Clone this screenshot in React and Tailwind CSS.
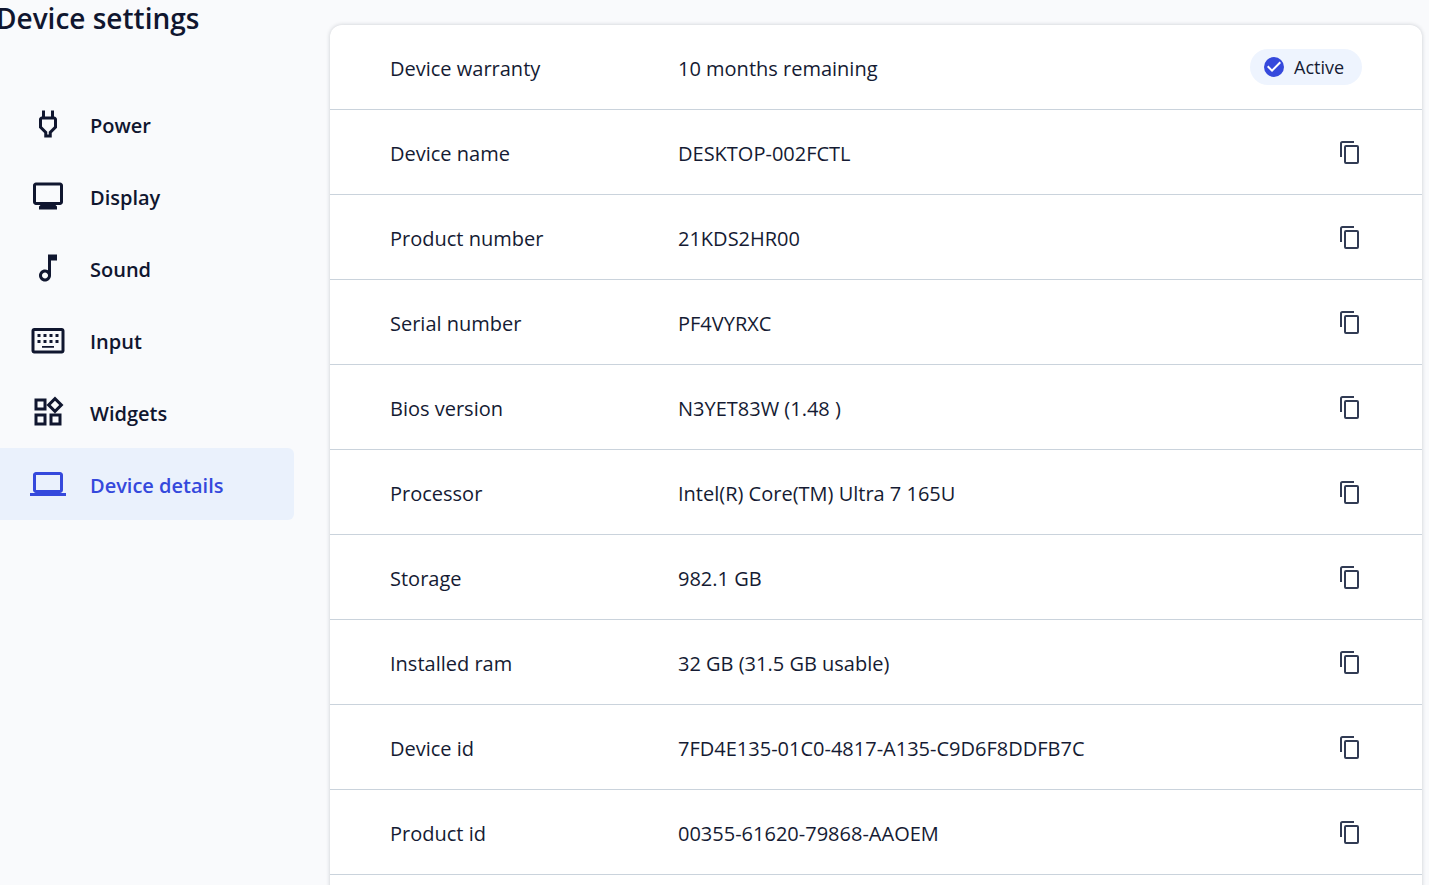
import React from "react";

const navItems = [
  { label: "Power", d: "M16 9v4.66l-3.5 3.51V19h-1v-1.83L8 13.65V9h8m0-6h-2v4h-4V3H8v4h-.01C6.9 6.99 6 7.89 6 8.98v5.52L9.5 18v3h5v-3l3.5-3.51V9c0-1.1-.9-2-2-2V3z" },
  { label: "Display", d: "M20 3H4c-1.1 0-2 .9-2 2v11c0 1.1.9 2 2 2h3l-1 1v2h12v-2l-1-1h3c1.1 0 2-.9 2-2V5c0-1.1-.9-2-2-2zm0 13H4V5h16v11z" },
  { label: "Sound", d: "M12 3l.01 10.55c-.59-.34-1.27-.55-2-.55C7.79 13 6 14.79 6 17s1.79 4 4.01 4S14 19.21 14 17V7h4V3h-6zm-1.99 16c-1.1 0-2-.9-2-2s.9-2 2-2 2 .9 2 2-.9 2-2 2z" },
  { label: "Input", d: "M21.2 4H2.8C1.8 4 1 4.8 1 5.8v13.4c0 1 .8 1.8 1.8 1.8h18.4c1 0 1.8-.8 1.8-1.8V5.8c0-1-.8-1.8-1.8-1.8zM21 19H3V6h18v13zM5 8h2v2H5zM9 8h2v2H9zM13 8h2v2h-2zM17 8h2v2h-2zM5 12h2v2H5zM9 12h2v2H9zM13 12h2v2h-2zM17 12h2v2h-2zM8 16h8v1.2H8z" },
  { label: "Widgets", d: "M16.66 4.52l2.83 2.83-2.83 2.83-2.83-2.83 2.83-2.83M9 5v4H5V5h4m10 10v4h-4v-4h4M9 15v4H5v-4h4m7.66-13.31L11 7.34 16.66 13l5.66-5.66-5.66-5.65zM11 3H3v8h8V3zm10 10h-8v8h8v-8zm-10 0H3v8h8v-8z" },
  { label: "Device details", active: true, d: "M20 18c1.1 0 1.99-.9 1.99-2L22 6c0-1.1-.9-2-2-2H4c-1.1 0-2 .9-2 2v10c0 1.1.9 2 2 2H0v2h24v-2h-4zM4 6h16v10H4V6z" },
];

const details = [
  ["Device name", "DESKTOP-002FCTL"],
  ["Product number", "21KDS2HR00"],
  ["Serial number", "PF4VYRXC"],
  ["Bios version", "N3YET83W (1.48 )"],
  ["Processor", "Intel(R) Core(TM) Ultra 7 165U"],
  ["Storage", "982.1 GB"],
  ["Installed ram", "32 GB (31.5 GB usable)"],
  ["Device id", "7FD4E135-01C0-4817-A135-C9D6F8DDFB7C"],
  ["Product id", "00355-61620-79868-AAOEM"],
];

function NavLink({ item }) {
  return (
    <a
      href="#"
      aria-current={item.active ? "page" : undefined}
      className={`flex h-[72px] items-center gap-6 rounded-r-md pt-1 pl-[30px] font-semibold ${
        item.active ? "bg-[#eaf1fc] text-[#3549dc]" : "text-[#10162f]"
      }`}
    >
      <svg viewBox="0 0 24 24" className="mb-1 size-9 shrink-0" fill="currentColor" fillRule="evenodd" aria-hidden="true">
        <path d={item.d} />
      </svg>
      {item.label}
    </a>
  );
}

function CopyButton({ label }) {
  return (
    <button type="button" aria-label={`Copy ${label}`} className="block text-[#313b54]">
      <svg viewBox="0 0 24 26" className="h-[26px] w-6" fill="none" stroke="currentColor" strokeWidth="2" aria-hidden="true">
        <path d="M3 18V4.5Q3 3 4.5 3H16" />
        <rect x="7" y="7" width="13" height="17" rx="1" />
      </svg>
    </button>
  );
}

function DetailRow({ label, value, children }) {
  return (
    <tr className="h-[85px]">
      <th scope="row" className="border-b border-[#cad3dc] pt-1 pl-[60px] text-left font-normal">{label}</th>
      <td className="border-b border-[#cad3dc] pt-1">{value}</td>
      <td className="border-b border-[#cad3dc] pr-[60px]">
        <div className="flex justify-end">{children}</div>
      </td>
    </tr>
  );
}

export default function App() {
  return (
    <div className="flex h-screen overflow-hidden bg-[#f9fafc] font-['Open_Sans','Noto_Sans',sans-serif] text-xl text-[#151b33]">
      <aside className="w-[294px] shrink-0">
        <h1 className="-ml-1 text-[28px] leading-9 font-semibold whitespace-nowrap text-[#10162f]">Device settings</h1>
        <nav className="mt-[52px]">
          {navItems.map((item) => (
            <NavLink key={item.label} item={item} />
          ))}
        </nav>
      </aside>
      <main className="min-w-0 flex-1 pt-[25px] pr-[7px] pl-9">
        <div className="rounded-xl bg-white shadow-[0_0_4px_rgba(15,23,42,0.2)]">
          <table className="w-full table-fixed border-separate border-spacing-0">
            <colgroup>
              <col className="w-[348px]" />
              <col />
              <col className="w-[180px]" />
            </colgroup>
            <tbody>
              <DetailRow label="Device warranty" value="10 months remaining">
                <span className="flex h-9 w-28 items-center gap-2 rounded-full bg-[#eef4fe] pl-3 text-lg">
                  <svg viewBox="0 0 24 24" className="size-6 shrink-0" aria-hidden="true">
                    <circle cx="12" cy="12" r="10" fill="#3549dc" />
                    <path d="M10 17l-5-5 1.4-1.4 3.6 3.6 7.6-7.6L19 8z" fill="white" />
                  </svg>
                  Active
                </span>
              </DetailRow>
              {details.map(([label, value]) => (
                <DetailRow key={label} label={label} value={value}>
                  <CopyButton label={label} />
                </DetailRow>
              ))}
              <tr className="h-[85px]">
                <td colSpan={3} />
              </tr>
            </tbody>
          </table>
        </div>
      </main>
    </div>
  );
}
